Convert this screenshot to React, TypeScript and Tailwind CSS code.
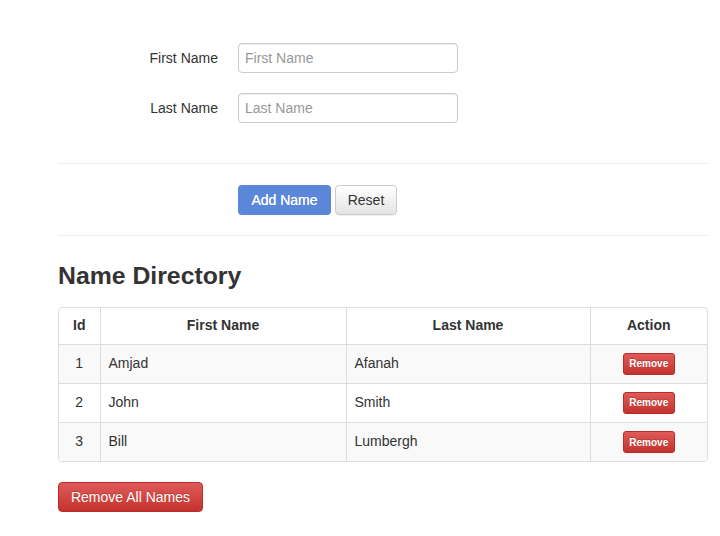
const people = [
    { id: 1, first: "Amjad", last: "Afanah" },
    { id: 2, first: "John", last: "Smith" },
    { id: 3, first: "Bill", last: "Lumbergh" },
];

const FormRow = ({ label }: { label: string }) => {
    return (
        <div className="flex items-center gap-[20px]">
            <label className="w-[160px] text-right">{label}</label>
            <input
                type="text"
                placeholder={label}
                className="w-[220px] h-[30px] px-[6px] border border-[#cccccc] rounded-[4px] shadow-[inset_0_1px_1px_rgba(0,0,0,0.075)] placeholder:text-[#999999] outline-none"
            />
        </div>
    );
};

export default function App() {
    return (
        <div className="min-h-[536px] bg-white text-[#333333] text-[14px] font-['Liberation_Sans',Arial,sans-serif]">
            <div className="pl-[58px] pr-[12px] pt-[43px]">
                <form className="flex flex-col gap-[20px]">
                    <FormRow label="First Name" />
                    <FormRow label="Last Name" />
                </form>

                <hr className="mt-[40px] border-[#eeeeee]" />

                <div className="flex gap-[4px] pl-[180px] mt-[21px]">
                    <button className="h-[30px] w-[93px] rounded-[4px] bg-[#5b87da] text-white [text-shadow:0_0_0.4px_#fff]">
                        Add Name
                    </button>
                    <button className="h-[30px] w-[62px] rounded-[4px] border border-[#cccccc] bg-gradient-to-b from-white to-[#e4e4e4] shadow-[0_1px_1px_rgba(0,0,0,0.06)]">
                        Reset
                    </button>
                </div>

                <hr className="mt-[20px] border-[#eeeeee]" />

                <h2 className="mt-[27px] text-[24.8px] leading-[26px] font-bold">Name Directory</h2>

                <div className="mt-[18px] border border-[#dddddd] rounded-[4px] overflow-hidden">
                    <table className="w-full border-collapse">
                        <colgroup>
                            <col className="w-[41px]" />
                            <col className="w-[246px]" />
                            <col className="w-[244px]" />
                            <col />
                        </colgroup>
                        <thead>
                            <tr className="h-[36px]">
                                <th className="font-bold">Id</th>
                                <th className="font-bold border-l border-[#dddddd]">First Name</th>
                                <th className="font-bold border-l border-[#dddddd]">Last Name</th>
                                <th className="font-bold border-l border-[#dddddd]">Action</th>
                            </tr>
                        </thead>
                        <tbody>
                            {people.map((p) => (
                                <tr
                                    key={p.id}
                                    className={`h-[39px] border-t border-[#dddddd] ${p.id % 2 === 1 ? "bg-[#f9f9f9]" : "bg-white"}`}
                                >
                                    <td className="text-center">{p.id}</td>
                                    <td className="pl-[8px] border-l border-[#dddddd]">{p.first}</td>
                                    <td className="pl-[8px] border-l border-[#dddddd]">{p.last}</td>
                                    <td className="text-center border-l border-[#dddddd]">
                                        <button className="h-[22px] w-[52px] rounded-[3px] border border-[#b92c28] bg-gradient-to-b from-[#e05a57] to-[#c3322e] text-white text-[10px] font-bold [text-shadow:0_-1px_0_rgba(0,0,0,0.2)]">
                                            Remove
                                        </button>
                                    </td>
                                </tr>
                            ))}
                        </tbody>
                    </table>
                </div>

                <button className="mt-[20px] h-[30px] w-[145px] rounded-[4px] border border-[#b92c28] bg-gradient-to-b from-[#e05a57] to-[#c3322e] text-white [text-shadow:0_-1px_0_rgba(0,0,0,0.2)]">
                    Remove All Names
                </button>
            </div>
        </div>
    );
}
